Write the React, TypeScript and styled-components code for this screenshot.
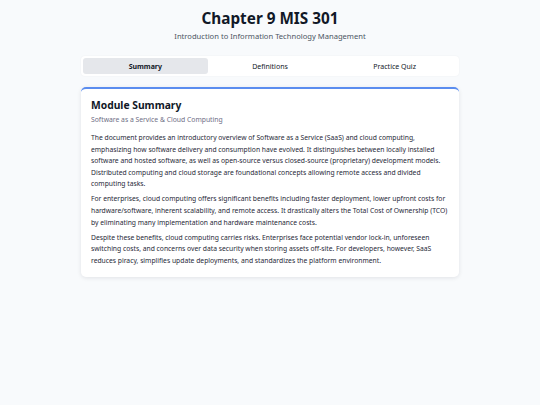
import React, { useState } from "react";
import styled, { createGlobalStyle } from "styled-components";

const GlobalStyle = createGlobalStyle`
  * { box-sizing: border-box; }
  body {
    margin: 0;
    background: #f8fafc;
    font-family: "Noto Sans", "Open Sans", sans-serif;
    color: #1f2937;
  }
`;

const Page = styled.div`
  max-width: 378px;
  margin: 0 auto;
  padding: 7px 0 20px;
`;

const Header = styled.header`
  text-align: center;
  margin-bottom: 15px;
`;

const Title = styled.h1`
  font-size: 15.3px;
  font-weight: 700;
  line-height: 22px;
  margin: 0;
  color: #111827;
`;

const Subtitle = styled.p`
  font-size: 7.6px;
  line-height: 10px;
  margin: 2px 0 0;
  color: #4b5563;
`;

const Tabs = styled.nav`
  display: grid;
  grid-template-columns: repeat(3, 1fr);
  background: #ffffff;
  border-radius: 4px;
  padding: 2px;
  box-shadow: 0 0 2px rgba(15, 23, 42, 0.06);
`;

const Tab = styled.button<{ $active?: boolean }>`
  border: none;
  font-family: inherit;
  font-size: 7px;
  font-weight: ${(p) => (p.$active ? 700 : 400)};
  color: #111827;
  background: ${(p) => (p.$active ? "#e5e7eb" : "transparent")};
  border-radius: 3px;
  height: 16px;
  padding: 0;
  cursor: pointer;
`;

const Card = styled.section`
  margin-top: 11px;
  background: #ffffff;
  border-top: 2px solid #5b8def;
  border-radius: 5px;
  padding: 9px 10px 7px;
  box-shadow: 0 1px 4px rgba(15, 23, 42, 0.1);
`;

const CardTitle = styled.h2`
  font-size: 10.3px;
  font-weight: 700;
  line-height: 14px;
  margin: 0;
  color: #111827;
`;

const CardSubtitle = styled.p`
  font-size: 6.8px;
  line-height: 10px;
  margin: 3px 0 7px;
  color: #6e6e85;
`;

const Paragraph = styled.p`
  font-size: 6.75px;
  line-height: 11.6px;
  margin: 0 0 3.4px;
  color: #1f2937;
`;

const tabs = ["Summary", "Definitions", "Practice Quiz"];

export default function App() {
  const [active, setActive] = useState(0);
  return (
    <>
      <GlobalStyle />
      <Page>
        <Header>
          <Title>Chapter 9 MIS 301</Title>
          <Subtitle>Introduction to Information Technology Management</Subtitle>
        </Header>
        <Tabs>
          {tabs.map((t, i) => (
            <Tab key={t} $active={i === active} onClick={() => setActive(i)}>
              {t}
            </Tab>
          ))}
        </Tabs>
        <Card>
          <CardTitle>Module Summary</CardTitle>
          <CardSubtitle>Software as a Service &amp; Cloud Computing</CardSubtitle>
          <Paragraph>
            The document provides an introductory overview of Software as a Service (SaaS) and
            cloud computing, emphasizing how software delivery and consumption have evolved. It
            distinguishes between locally installed software and hosted software, as well as
            open-source versus closed-source (proprietary) development models. Distributed
            computing and cloud storage are foundational concepts allowing remote access and
            divided computing tasks.
          </Paragraph>
          <Paragraph>
            For enterprises, cloud computing offers significant benefits including faster
            deployment, lower upfront costs for hardware/software, inherent scalability, and remote
            access. It drastically alters the Total Cost of Ownership (TCO) by eliminating many
            implementation and hardware maintenance costs.
          </Paragraph>
          <Paragraph>
            Despite these benefits, cloud computing carries risks. Enterprises face potential
            vendor lock-in, unforeseen switching costs, and concerns over data security when
            storing assets off-site. For developers, however, SaaS reduces piracy, simplifies
            update deployments, and standardizes the platform environment.
          </Paragraph>
        </Card>
      </Page>
    </>
  );
}
